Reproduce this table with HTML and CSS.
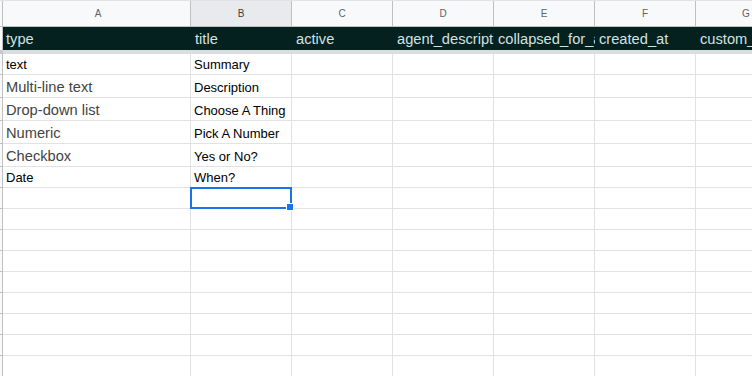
FILE: index.html
```html
<!DOCTYPE html>
<html>
<head>
<meta charset="utf-8">
<link rel="stylesheet" href="styles.css">
</head>
<body>
<div class="sheet">
  <div class="row colhead">
    <div class="gut"></div>
    <div class="c a">A</div>
    <div class="c sel">B</div>
    <div class="c">C</div>
    <div class="c">D</div>
    <div class="c">E</div>
    <div class="c">F</div>
    <div class="c">G</div>
  </div>
  <div class="row dark">
    <div class="gut"></div>
    <div class="c a">type</div>
    <div class="c">title</div>
    <div class="c">active</div>
    <div class="c">agent_description</div>
    <div class="c">collapsed_for_agents</div>
    <div class="c">created_at</div>
    <div class="c">custom_field_options</div>
  </div>
  <div class="frozen"><div class="gut"></div></div>
  <div class="row r21">
    <div class="gut"></div>
    <div class="c a">text</div>
    <div class="c">Summary</div>
    <div class="c"></div><div class="c"></div><div class="c"></div><div class="c"></div><div class="c"></div>
  </div>
  <div class="row r23">
    <div class="gut"></div>
    <div class="c a big">Multi-line text</div>
    <div class="c">Description</div>
    <div class="c"></div><div class="c"></div><div class="c"></div><div class="c"></div><div class="c"></div>
  </div>
  <div class="row r23">
    <div class="gut"></div>
    <div class="c a big">Drop-down list</div>
    <div class="c">Choose A Thing</div>
    <div class="c"></div><div class="c"></div><div class="c"></div><div class="c"></div><div class="c"></div>
  </div>
  <div class="row r23">
    <div class="gut"></div>
    <div class="c a big">Numeric</div>
    <div class="c">Pick A Number</div>
    <div class="c"></div><div class="c"></div><div class="c"></div><div class="c"></div><div class="c"></div>
  </div>
  <div class="row r23">
    <div class="gut"></div>
    <div class="c a big">Checkbox</div>
    <div class="c">Yes or No?</div>
    <div class="c"></div><div class="c"></div><div class="c"></div><div class="c"></div><div class="c"></div>
  </div>
  <div class="row r21">
    <div class="gut"></div>
    <div class="c a">Date</div>
    <div class="c">When?</div>
    <div class="c"></div><div class="c"></div><div class="c"></div><div class="c"></div><div class="c"></div>
  </div>
  <div class="row r21">
    <div class="gut"></div>
    <div class="c a"></div>
    <div class="c active"><span class="handle"></span></div>
    <div class="c"></div><div class="c"></div><div class="c"></div><div class="c"></div><div class="c"></div>
  </div>
  <div class="row r21"><div class="gut"></div><div class="c a"></div><div class="c"></div><div class="c"></div><div class="c"></div><div class="c"></div><div class="c"></div><div class="c"></div></div>
  <div class="row r21"><div class="gut"></div><div class="c a"></div><div class="c"></div><div class="c"></div><div class="c"></div><div class="c"></div><div class="c"></div><div class="c"></div></div>
  <div class="row r21"><div class="gut"></div><div class="c a"></div><div class="c"></div><div class="c"></div><div class="c"></div><div class="c"></div><div class="c"></div><div class="c"></div></div>
  <div class="row r21"><div class="gut"></div><div class="c a"></div><div class="c"></div><div class="c"></div><div class="c"></div><div class="c"></div><div class="c"></div><div class="c"></div></div>
  <div class="row r21"><div class="gut"></div><div class="c a"></div><div class="c"></div><div class="c"></div><div class="c"></div><div class="c"></div><div class="c"></div><div class="c"></div></div>
  <div class="row r21"><div class="gut"></div><div class="c a"></div><div class="c"></div><div class="c"></div><div class="c"></div><div class="c"></div><div class="c"></div><div class="c"></div></div>
  <div class="row r21"><div class="gut"></div><div class="c a"></div><div class="c"></div><div class="c"></div><div class="c"></div><div class="c"></div><div class="c"></div><div class="c"></div></div>
  <div class="row r21"><div class="gut"></div><div class="c a"></div><div class="c"></div><div class="c"></div><div class="c"></div><div class="c"></div><div class="c"></div><div class="c"></div></div>
</div>
</body>
</html>
```

FILE: styles.css
```css
html, body {
  margin: 0;
  padding: 0;
  background: #ffffff;
  overflow: hidden;
}
body {
  width: 752px;
  height: 376px;
  font-family: "Liberation Sans", Arial, sans-serif;
}
.sheet {
  width: 752px;
  overflow: hidden;
}
.row {
  display: grid;
  grid-template-columns: 3px 188px 101px 101px 101px 101px 101px 57px;
}
.gut {
  background: #f8f9fa;
  border-right: 1px solid #c0c0c0;
  border-bottom: 1px solid #c0c0c0;
  box-sizing: border-box;
}
.c {
  box-sizing: border-box;
  border-right: 1px solid #e2e2e2;
  border-bottom: 1px solid #e2e2e2;
  overflow: hidden;
  white-space: nowrap;
  font-size: 13px;
  color: #000000;
  padding: 0 3px 0 3px;
  display: flex;
  align-items: flex-end;
  position: relative;
}
.colhead {
  height: 27px;
  border-top: 1px solid #e2e2e2;
  box-sizing: border-box;
}
.colhead .c {
  background: #f8f9fa;
  border-right: 1px solid #c0c0c0;
  border-bottom: 1px solid #c0c0c0;
  justify-content: center;
  align-items: center;
  font-size: 10px;
  color: #5f6368;
  padding: 0;
}
.colhead .c:last-child {
  padding-left: 44px;
}
.colhead .c.sel {
  background: #e8eaed;
  color: #3c4043;
}
.colhead .gut {
  border-bottom: 1px solid #c0c0c0;
}
.dark {
  height: 23px;
  background: #04201f;
}
.dark .gut {
  background: #f8f9fa;
  border-bottom: none;
}
.dark .c {
  border: none;
  color: #d2e2e1;
  font-size: 14.67px;
  align-items: center;
  padding-left: 4px;
  padding-top: 0;
}
.frozen {
  height: 4px;
  background: #dadce0;
  display: grid;
  grid-template-columns: 3px;
}
.frozen .gut {
  background: #c8c8c8;
  border: none;
}
.r21 {
  height: 21px;
}
.r23 {
  height: 23px;
}
.r21 .c {
  padding-bottom: 2px;
}
.r23 .c {
  padding-bottom: 2px;
}
.c.a {
  padding-left: 3px;
}
.r23 .c.big {
  font-size: 14.67px;
  color: #434343;
  padding-bottom: 2px;
}
.c.active {
  border: 2px solid #1a73e8;
  margin: -1px 0 0 -1px;
  width: 102px;
  height: 22px;
  overflow: visible;
  z-index: 2;
}
.handle {
  position: absolute;
  right: -4px;
  bottom: -4px;
  width: 6px;
  height: 6px;
  background: #1a73e8;
  border: 1px solid #ffffff;
}
```
